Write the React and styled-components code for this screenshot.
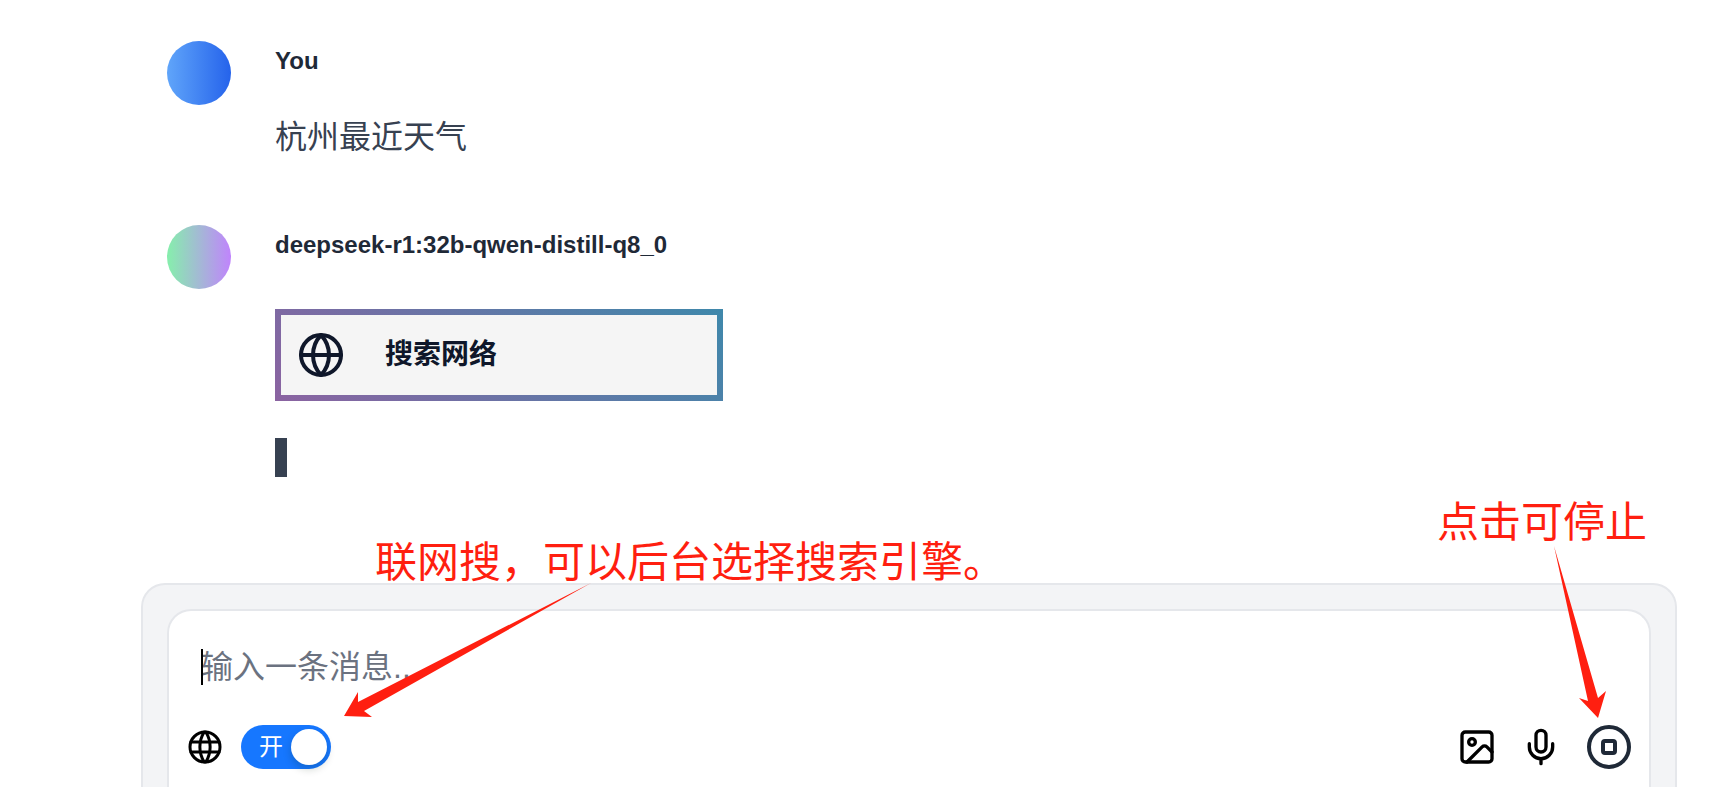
import React from "react";
import styled, { createGlobalStyle } from "styled-components";

const GlobalStyle = createGlobalStyle`
  *, *::before, *::after { box-sizing: border-box; }
  body {
    margin: 0;
    background: #ffffff;
    color: #1f2937;
    font-family: "Liberation Sans", "Noto Sans CJK SC", sans-serif;
  }
  p, h2 { margin: 0; }
`;

const Page = styled.main`
  display: flex;
  flex-direction: column;
  min-height: 100vh;
  padding: 0 34px 0 141px;
`;

const Thread = styled.section`
  display: flex;
  flex-direction: column;
  gap: 64px;
  padding: 41px 26px 106px;
`;

const Message = styled.article`
  display: flex;
  align-items: flex-start;
  gap: 44px;
`;

const Avatar = styled.div`
  flex: none;
  width: 64px;
  height: 64px;
  border-radius: 50%;
  background: linear-gradient(to right, ${(p) => p.$from}, ${(p) => p.$to});
`;

const MessageBody = styled.div`
  display: flex;
  flex-direction: column;
  align-items: flex-start;
  min-width: 0;
`;

const Author = styled.h2`
  font-size: 24px;
  line-height: 40px;
  font-weight: 700;
  color: #1f2937;
`;

const MessageText = styled.p`
  margin-top: 32px;
  font-size: 32px;
  line-height: 48px;
  color: #374151;
`;

const ToolFrame = styled.div`
  width: 448px;
  max-width: 100%;
  margin-top: 44px;
  padding: 6px;
  background: linear-gradient(45deg, #8b63a1, #3f88ab);
`;

const ToolCard = styled.div`
  display: flex;
  align-items: center;
  gap: 40px;
  height: 80px;
  padding: 0 16px;
  background: #f5f5f5;
  color: #0f172a;
  font-size: 28px;
  line-height: 40px;
  font-weight: 700;
`;

const StreamCursor = styled.span`
  width: 12px;
  height: 39px;
  margin-top: 37px;
  background: #374151;
`;

const Composer = styled.form`
  position: relative;
  display: flex;
  flex: 1;
  padding: 24px 24px 0;
  border: 2px solid #e5e7eb;
  border-bottom: 0;
  border-radius: 24px 24px 0 0;
  background: #f3f4f6;
`;

const ComposerCard = styled.div`
  flex: 1;
  min-width: 0;
  padding: 32px 16px 16px;
  border: 2px solid #e5e7eb;
  border-bottom: 0;
  border-radius: 24px 24px 0 0;
  background: #ffffff;
`;

const InputWrap = styled.div`
  position: relative;
  margin: 0 16px;
`;

const Caret = styled.span`
  position: absolute;
  top: 6px;
  left: 0;
  width: 2px;
  height: 36px;
  background: #000000;
`;

const MessageInput = styled.textarea`
  display: block;
  width: 100%;
  height: 48px;
  padding: 0;
  border: 0;
  outline: 0;
  resize: none;
  overflow: hidden;
  background: transparent;
  color: #1f2937;
  font: inherit;
  font-size: 32px;
  line-height: 48px;
  &::placeholder { color: #6b7280; opacity: 1; }
`;

const Toolbar = styled.div`
  display: flex;
  align-items: center;
  justify-content: space-between;
  margin-top: 32px;
`;

const ToolGroup = styled.div`
  display: flex;
  align-items: center;
  gap: ${(p) => p.$gap};
`;

const SwitchTrack = styled.label`
  position: relative;
  display: flex;
  align-items: center;
  width: 90px;
  height: 44px;
  padding-left: 18px;
  border-radius: 22px;
  background: #1677ff;
  color: #ffffff;
  font-size: 24px;
  line-height: 44px;
  cursor: pointer;
`;

const SwitchInput = styled.input`
  appearance: none;
  position: absolute;
  top: 4px;
  right: 4px;
  width: 36px;
  height: 36px;
  margin: 0;
  border-radius: 50%;
  background: #ffffff;
  box-shadow: 0 4px 8px rgba(0, 35, 11, 0.2);
  cursor: pointer;
`;

const IconButton = styled.button`
  display: flex;
  padding: 0;
  border: 0;
  background: none;
  color: ${(p) => p.$color || "#000000"};
  cursor: pointer;
`;

const Icon = styled.svg`
  display: block;
  flex: none;
  width: ${(p) => p.$size};
  height: ${(p) => p.$size};
  fill: none;
  stroke: currentColor;
  stroke-width: ${(p) => p.$stroke || 2};
  stroke-linecap: round;
  stroke-linejoin: round;
`;

const Note = styled.p`
  position: absolute;
  top: ${(p) => p.$top};
  left: ${(p) => p.$left};
  right: ${(p) => p.$right};
  color: #ff1f10;
  font-family: "Noto Sans CJK SC", sans-serif;
  font-size: 42px;
  line-height: 60px;
  white-space: nowrap;
`;

const Arrow = styled.svg`
  position: absolute;
  top: ${(p) => p.$top};
  left: ${(p) => p.$left};
  right: ${(p) => p.$right};
  fill: #ff1f10;
  pointer-events: none;
`;

export default function App() {
  return (
    <>
      <GlobalStyle />
      <Page>
        <Thread>
          <Message>
            <Avatar $from="#60a5fa" $to="#2563eb" />
            <MessageBody>
              <Author>You</Author>
              <MessageText>杭州最近天气</MessageText>
            </MessageBody>
          </Message>
          <Message>
            <Avatar $from="#86efac" $to="#c084fc" />
            <MessageBody>
              <Author>deepseek-r1:32b-qwen-distill-q8_0</Author>
              <ToolFrame>
                <ToolCard>
                  <Icon $size="48px" viewBox="0 0 24 24" aria-hidden="true">
                    <circle cx="12" cy="12" r="10" />
                    <path d="M12 2a14.5 14.5 0 0 0 0 20 14.5 14.5 0 0 0 0-20" />
                    <path d="M2 12h20" />
                  </Icon>
                  搜索网络
                </ToolCard>
              </ToolFrame>
              <StreamCursor aria-hidden="true" />
            </MessageBody>
          </Message>
        </Thread>

        <Composer onSubmit={(e) => e.preventDefault()}>
          <ComposerCard>
            <InputWrap>
              <MessageInput aria-label="输入一条消息" placeholder="输入一条消息..." />
              <Caret aria-hidden="true" />
            </InputWrap>
            <Toolbar>
              <ToolGroup $gap="16px">
                <Icon $size="40px" $stroke={1.8} viewBox="0 0 24 24" color="#000" aria-hidden="true">
                  <circle cx="12" cy="12" r="9" />
                  <path d="M3.6 9h16.8M3.6 15h16.8" />
                  <path d="M11.5 3a17 17 0 0 0 0 18M12.5 3a17 17 0 0 1 0 18" />
                </Icon>
                <SwitchTrack>
                  开
                  <SwitchInput type="checkbox" role="switch" defaultChecked />
                </SwitchTrack>
              </ToolGroup>
              <ToolGroup $gap="24px">
                <IconButton type="button" aria-label="图片">
                  <Icon $size="40px" viewBox="0 0 24 24">
                    <rect x="3" y="3" width="18" height="18" rx="2" />
                    <circle cx="9" cy="9" r="2" />
                    <path d="m21 15-3.086-3.086a2 2 0 0 0-2.828 0L6 21" />
                  </Icon>
                </IconButton>
                <IconButton type="button" aria-label="语音">
                  <Icon $size="40px" viewBox="0 0 24 24">
                    <rect x="9" y="2" width="6" height="13" rx="3" />
                    <path d="M19 10v2a7 7 0 0 1-14 0v-2M12 19v3" />
                  </Icon>
                </IconButton>
                <IconButton type="button" aria-label="停止" $color="#1f2937">
                  <Icon $size="48px" viewBox="0 0 24 24">
                    <circle cx="12" cy="12" r="10" />
                    <rect x="9" y="9" width="6" height="6" rx="1" />
                  </Icon>
                </IconButton>
              </ToolGroup>
            </Toolbar>
          </ComposerCard>

          <Note $top="-56px" $left="232px">联网搜，可以后台选择搜索引擎。</Note>
          <Arrow $top="-5px" $left="197px" width="260" height="150" viewBox="340 580 260 150" aria-hidden="true">
            <path d="M591 583 358 702V692L344 716l28 1-8-6Z" />
          </Arrow>
          <Note $top="-96px" $right="28px">点击可停止</Note>
          <Arrow $top="-45px" $right="65px" width="70" height="190" viewBox="1540 540 70 190" aria-hidden="true">
            <path d="M1554 546 1588 701 1579 698 1598 718 1606 691 1598 698Z" />
          </Arrow>
        </Composer>
      </Page>
    </>
  );
}
